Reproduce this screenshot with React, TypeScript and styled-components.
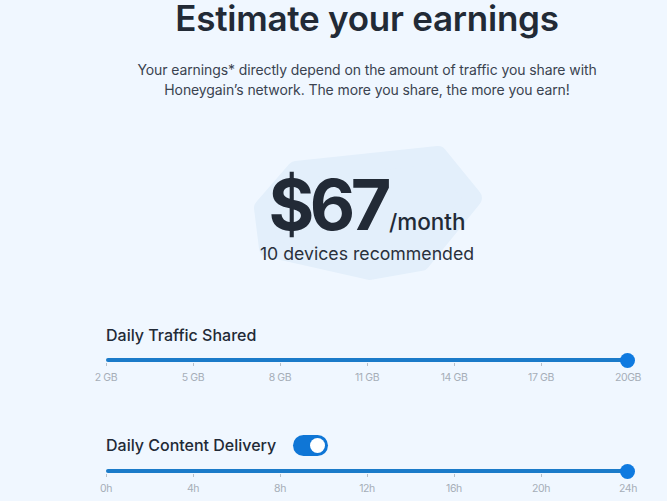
import React from "react";
import styled, { createGlobalStyle } from "styled-components";

const Global = createGlobalStyle`
  html, body { margin: 0; padding: 0; background: #f0f7ff; }
  body { font-family: Inter, "Noto Sans", sans-serif; color: #1f2632; }
  * { box-sizing: border-box; }
`;

const Page = styled.div`
  width: 667px;
  height: 501px;
  overflow: hidden;
  background: #f0f7ff;
  padding-left: 106px;
`;

const Column = styled.div`
  width: 522px;
  display: flex;
  flex-direction: column;
  align-items: center;
`;

const Title = styled.h1`
  margin: 0;
  font-size: 35px;
  line-height: 36px;
  font-weight: 600;
  letter-spacing: -0.25px;
  color: #222a36;
  white-space: nowrap;
`;

const Subtitle = styled.p`
  margin: 24px 0 0;
  width: 480px;
  text-align: center;
  font-size: 14px;
  line-height: 20px;
  font-weight: 400;
  letter-spacing: -0.1px;
  color: #3a4350;
`;

const PriceArea = styled.div`
  position: relative;
  width: 522px;
  height: 209px;
  display: flex;
  flex-direction: column;
  align-items: center;
  padding-top: 74px;
`;

const Blob = styled.svg`
  position: absolute;
  left: 0;
  top: 0;
  width: 522px;
  height: 209px;
  pointer-events: none;
`;

const PriceRow = styled.div`
  position: relative;
  display: flex;
  align-items: baseline;
  gap: 2px;
  height: 62px;
`;

const Amount = styled.span`
  font-size: 70px;
  line-height: 62px;
  font-weight: 700;
  letter-spacing: -4.5px;
  color: #222a36;
`;

const Per = styled.span`
  font-size: 22.5px;
  line-height: 26px;
  font-weight: 500;
  color: #222a36;
`;

const Devices = styled.div`
  position: relative;
  margin-top: 6px;
  font-size: 17.7px;
  line-height: 24px;
  font-weight: 400;
  color: #2a313c;
`;

const SliderBlock = styled.div<{ $gap: number }>`
  width: 522px;
  display: flex;
  flex-direction: column;
  margin-top: ${(p) => p.$gap}px;
`;

const LabelRow = styled.div`
  display: flex;
  align-items: center;
  gap: 17px;
  height: 22px;
`;

const SliderLabel = styled.span`
  font-size: 16px;
  font-weight: 500;
  color: #222a36;
`;

const Toggle = styled.div`
  width: 35px;
  height: 21px;
  border-radius: 11px;
  background: #0f76d6;
  display: flex;
  align-items: center;
  justify-content: flex-end;
  padding-right: 3px;
`;

const Knob = styled.div`
  width: 15px;
  height: 15px;
  border-radius: 50%;
  background: #ffffff;
`;

const Track = styled.div<{ $mt: number }>`
  position: relative;
  margin-top: ${(p) => p.$mt}px;
  height: 4px;
  border-radius: 2px;
  background: #1b7bc9;
`;

const Thumb = styled.div`
  position: absolute;
  right: -7px;
  top: -5px;
  width: 15px;
  height: 15px;
  border-radius: 50%;
  background: #0f7ae0;
`;

const Scale = styled.div`
  display: flex;
  justify-content: space-between;
  margin-top: 1px;
`;

const Mark = styled.div`
  width: 0;
  display: flex;
  flex-direction: column;
  align-items: center;
`;

const Tick = styled.div`
  width: 1px;
  height: 3px;
  background: #b9c0c8;
`;

const MarkText = styled.span`
  margin-top: 5px;
  font-size: 10.5px;
  line-height: 13px;
  white-space: nowrap;
  letter-spacing: -0.4px;
  color: #a6aeb8;
`;

const gbMarks = ["2 GB", "5 GB", "8 GB", "11 GB", "14 GB", "17 GB", "20GB"];
const hMarks = ["0h", "4h", "8h", "12h", "16h", "20h", "24h"];

function Marks({ items }: { items: string[] }) {
  return (
    <Scale>
      {items.map((m) => (
        <Mark key={m}>
          <Tick />
          <MarkText>{m}</MarkText>
        </Mark>
      ))}
    </Scale>
  );
}

export default function App() {
  return (
    <Page>
      <Global />
      <Column>
        <Title>Estimate your earnings</Title>
        <Subtitle>
          Your earnings* directly depend on the amount of traffic you share with Honeygain’s network. The more you share, the more you earn!
        </Subtitle>
        <PriceArea>
          <Blob viewBox="0 0 522 209">
            <path
              d="M190 70 L332 55 L367 98 L315 162 L264 171 L162 148 L157 108 Z"
              fill="#e3effb"
              stroke="#e3effb"
              strokeWidth="18"
              strokeLinejoin="round"
            />
          </Blob>
          <PriceRow>
            <Amount>$67</Amount>
            <Per>/month</Per>
          </PriceRow>
          <Devices>10 devices recommended</Devices>
        </PriceArea>
        <SliderBlock $gap={15}>
          <LabelRow>
            <SliderLabel>Daily Traffic Shared</SliderLabel>
          </LabelRow>
          <Track $mt={12}>
            <Thumb />
          </Track>
          <Marks items={gbMarks} />
        </SliderBlock>
        <SliderBlock $gap={50}>
          <LabelRow>
            <SliderLabel>Daily Content Delivery</SliderLabel>
            <Toggle>
              <Knob />
            </Toggle>
          </LabelRow>
          <Track $mt={13}>
            <Thumb />
          </Track>
          <Marks items={hMarks} />
        </SliderBlock>
      </Column>
    </Page>
  );
}
